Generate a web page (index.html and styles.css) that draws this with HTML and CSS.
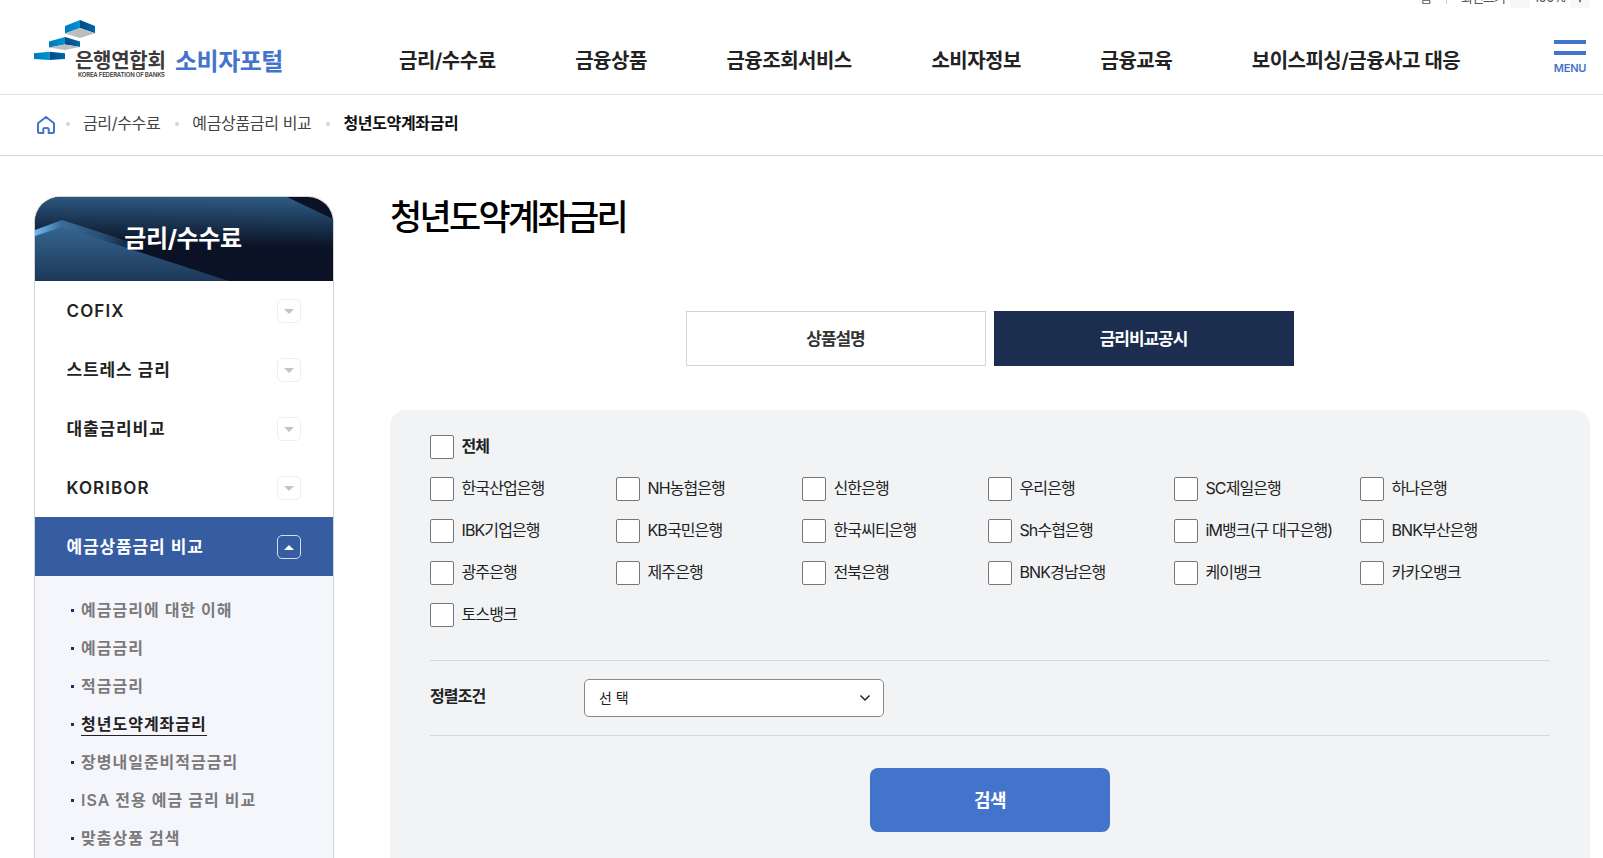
FILE: index.html
```
<!DOCTYPE html>
<html lang="ko">
<head>
  <title>청년도약계좌금리 | 은행연합회 소비자포털</title>
  <meta charset="UTF-8" />
  <link rel="stylesheet" href="styles.css">
</head>
<body>
  <header>
    <div class="util">
      <a href="#">홈</a>
      <span class="util-line"></span>
      <span class="zoom-label">화면크기</span>
      <button class="zoom-btn">-</button>
      <span class="zoom-value">100%</span>
      <button class="zoom-btn">+</button>
    </div>
    <div class="gnb">
      <a href="#" class="logo">
        <svg class="logo-mark" width="62" height="42" viewBox="0 0 62 42">
          <defs>
            <linearGradient id="face-l" x1="0" x2="1"><stop offset="0" stop-color="#0079bd"/><stop offset="1" stop-color="#0093d6"/></linearGradient>
            <linearGradient id="face-r" x1="0" x2="1"><stop offset="0" stop-color="#004a80"/><stop offset="1" stop-color="#0068ac"/></linearGradient>
          </defs>
          <path fill="url(#face-l)" d="M31 7 46 1v8L31 14.5z"/>
          <path fill="url(#face-r)" d="M46 1 61 7v7.300L46 9z"/>
          <path fill="#bdbdbd" d="M31 14.500 46 9l15 5.300L46 19z"/>
          <path fill="url(#face-l)" d="M15 22.500 31 18v7.500l-16 3z"/>
          <path fill="url(#face-r)" d="M31 18l15 4.500V28l-15-2.500z"/>
          <path fill="#bdbdbd" d="M15 28.500l16-3L46 28l-15 3z"/>
          <path fill="url(#face-l)" d="M0 34.300 15.500 32.700V41L0 40z"/>
          <path fill="url(#face-r)" d="M15.500 32.700 31 34.300V40l-15.500 1z"/>
        </svg>
        <span class="logo-name">
          <strong>은행연합회</strong>
          <small>KOREA FEDERATION OF BANKS</small>
        </span>
        <span class="logo-portal">소비자포털</span>
      </a>
      <nav>
        <a href="#">금리/수수료</a>
        <a href="#">금융상품</a>
        <a href="#">금융조회서비스</a>
        <a href="#">소비자정보</a>
        <a href="#">금융교육</a>
        <a href="#">보이스피싱/금융사고 대응</a>
      </nav>
      <button class="menu-btn">
        <span class="menu-bar"></span>
        <span class="menu-bar"></span>
        MENU
      </button>
    </div>
  </header>

  <div class="breadcrumb">
    <svg class="home" width="18" height="18" viewBox="0 0 18 18" fill="none" stroke="#4374cb" stroke-width="2" stroke-linejoin="round">
      <path d="M1 7.200 9 1l8 6.200V15.500Q17 17 15.500 17H11.700V13.500Q11.700 12 10.200 12H7.800Q6.300 12 6.300 13.500V17H2.500Q1 17 1 15.500z"/>
    </svg>
    <i class="dot"></i>
    <a href="#">금리/수수료</a>
    <i class="dot"></i>
    <a href="#">예금상품금리 비교</a>
    <i class="dot"></i>
    <strong>청년도약계좌금리</strong>
  </div>

  <div class="container">
    <aside>
      <h2>
        <svg class="title-bg" viewBox="0 0 298 84" preserveAspectRatio="none">
          <defs>
            <linearGradient id="sky" x1="0.55" y1="0" x2="0.47" y2="1"><stop offset="0" stop-color="#2c5a82"/><stop offset="0.85" stop-color="#0b1226"/></linearGradient>
            <linearGradient id="hill" x1="0" y1="0" x2="0" y2="1"><stop offset="0" stop-color="#35658f"/><stop offset="1" stop-color="#1c3858"/></linearGradient>
            <linearGradient id="ridge" x1="0" x2="1"><stop offset="0" stop-color="#6db9f5"/><stop offset="0.25" stop-color="#3b6c9a"/><stop offset="0.65" stop-color="#2a4c72"/><stop offset="1" stop-color="#0c142b"/></linearGradient>
          </defs>
          <path fill="#0b1226" d="M0 0h298v84H0z"/>
          <path fill="url(#sky)" d="M0 0H252L298 22V57L0 34z"/>
          <path fill="url(#ridge)" d="M0 33 27 23 105 48V60L0 40z"/>
          <path fill="url(#hill)" d="M0 39 27 30 194 84H0z"/>
        </svg>
        <span>금리/수수료</span>
      </h2>
      <ul class="lnb">
        <li><a href="#" class="en">COFIX <i class="arrow"></i></a></li>
        <li><a href="#">스트레스 금리 <i class="arrow"></i></a></li>
        <li><a href="#">대출금리비교 <i class="arrow"></i></a></li>
        <li><a href="#" class="en">KORIBOR <i class="arrow"></i></a></li>
        <li class="active">
          <a href="#">예금상품금리 비교 <i class="arrow"></i></a>
          <ul class="sub">
            <li><a href="#">예금금리에 대한 이해</a></li>
            <li><a href="#">예금금리</a></li>
            <li><a href="#">적금금리</a></li>
            <li><a href="#" class="on">청년도약계좌금리</a></li>
            <li><a href="#">장병내일준비적금금리</a></li>
            <li><a href="#">ISA 전용 예금 금리 비교</a></li>
            <li><a href="#">맞춤상품 검색</a></li>
          </ul>
        </li>
      </ul>
    </aside>

    <main>
      <h1>청년도약계좌금리</h1>
      <div class="tabs">
        <a href="#">상품설명</a>
        <a href="#" class="on">금리비교공시</a>
      </div>
      <form class="search-box">
        <div class="banks">
          <label class="all"><input type="checkbox">전체</label>
          <label><input type="checkbox">한국산업은행</label>
          <label><input type="checkbox">NH농협은행</label>
          <label><input type="checkbox">신한은행</label>
          <label><input type="checkbox">우리은행</label>
          <label><input type="checkbox">SC제일은행</label>
          <label><input type="checkbox">하나은행</label>
          <label><input type="checkbox">IBK기업은행</label>
          <label><input type="checkbox">KB국민은행</label>
          <label><input type="checkbox">한국씨티은행</label>
          <label><input type="checkbox">Sh수협은행</label>
          <label><input type="checkbox">iM뱅크(구 대구은행)</label>
          <label><input type="checkbox">BNK부산은행</label>
          <label><input type="checkbox">광주은행</label>
          <label><input type="checkbox">제주은행</label>
          <label><input type="checkbox">전북은행</label>
          <label><input type="checkbox">BNK경남은행</label>
          <label><input type="checkbox">케이뱅크</label>
          <label><input type="checkbox">카카오뱅크</label>
          <label><input type="checkbox">토스뱅크</label>
        </div>
        <div class="sort">
          <strong>정렬조건</strong>
          <div class="select">
            선 택
            <svg width="12" height="8" viewBox="0 0 12 8" fill="none" stroke="#222" stroke-width="1.500"><path d="M1.500 1.500 6 6l4.500-4.500"/></svg>
          </div>
        </div>
        <button type="button" class="search-btn">검색</button>
      </form>
    </main>
  </div>
</body>
</html>
```

FILE: styles.css
```
* {
  box-sizing: border-box;
}
body {
  margin: 0;
  background: #fff;
  color: #222;
  font-family: Inter, "Noto Sans CJK KR", sans-serif;
  font-size: 16px;
}
a {
  color: inherit;
  text-decoration: none;
}
ul {
  list-style: none;
  margin: 0;
  padding: 0;
}
button {
  border: 0;
  padding: 0;
  font-family: inherit;
}

/* header */
header {
  height: 95px;
  border-bottom: 1px solid #e1e1e1;
}
.util {
  display: flex;
  justify-content: flex-end;
  align-items: flex-end;
  height: 8px;
  padding-right: 13px;
  overflow: hidden;
  font-size: 13px;
  line-height: 21px;
  letter-spacing: -1px;
  color: #555;
}
.util-line {
  width: 1px;
  height: 14px;
  margin: 0 14px 4px 15px;
  background: #ccc;
}
.zoom-label {
  margin-right: 5px;
}
.zoom-value {
  width: 40px;
  text-align: center;
  letter-spacing: -0.5px;
}
.zoom-btn {
  width: 20px;
  height: 20px;
  border-radius: 3px;
  background: #f7f7f7;
  font-size: 15px;
  line-height: 16px;
  color: #333;
}
.gnb {
  display: flex;
  height: 86px;
  padding: 0 17px 0 34px;
}
.logo {
  display: flex;
  width: 365px;
  padding-top: 11px;
}
.logo-mark {
  flex: none;
  margin-right: -21px;
}
.logo-name {
  display: flex;
  flex-direction: column;
  width: 91px;
  padding-top: 30px;
  color: #3e3a39;
}
.logo-name strong {
  font-size: 20px;
  font-weight: 600;
  line-height: 24px;
  letter-spacing: -0.3px;
}
.logo-name small {
  margin-left: 3px;
  font-size: 6px;
  font-weight: 600;
  line-height: 4px;
  letter-spacing: -0.2px;
  white-space: nowrap;
}
.logo-portal {
  margin-left: 9px;
  padding-top: 25px;
  font-size: 24px;
  font-weight: 700;
  line-height: 36px;
  letter-spacing: -0.5px;
  color: #4374cb;
}
nav {
  display: flex;
  flex: 1;
  gap: 79.700px;
  font-size: 20px;
  font-weight: 600;
  line-height: 30px;
  letter-spacing: -0.510px;
  padding-top: 38px;
  white-space: nowrap;
}
.menu-btn {
  display: flex;
  flex-direction: column;
  align-items: center;
  width: 32px;
  padding-top: 32px;
  background: none;
  color: #4374cb;
  font-size: 11px;
  font-weight: 600;
  line-height: 12px;
  letter-spacing: -0.2px;
}
.menu-bar {
  width: 32px;
  height: 4px;
  margin-bottom: 7px;
  background: #4374cb;
}

/* breadcrumb */
.breadcrumb {
  display: flex;
  height: 61px;
  padding: 16px 37px 0;
  border-bottom: 1px solid #d5d5d5;
  line-height: 24px;
  letter-spacing: -0.350px;
  color: #444;
}
.breadcrumb strong {
  color: #111;
}
.home {
  margin-top: 5px;
}
.dot {
  width: 4px;
  height: 4px;
  margin: 11px 13px 0 15px;
  border-radius: 50%;
  background: #d5d5d5;
}
.home + .dot {
  margin-left: 11px;
}

/* left menu */
.container {
  display: flex;
  gap: 56px;
  height: calc(100vh - 156px);
  padding: 40px 13px 0 34px;
}
aside {
  flex: none;
  width: 300px;
  overflow: hidden;
  border: 1px solid #d3d3d3;
  border-bottom: 0;
  border-radius: 26px 26px 0 0;
}
aside h2 {
  display: grid;
  height: 84px;
  margin: 0;
  color: #fff;
  font-size: 24px;
  letter-spacing: -0.4px;
}
aside h2 > * {
  grid-area: 1 / 1;
}
aside h2 span {
  place-self: center;
  padding: 0 2px 6px 0;
  z-index: 1;
}
.title-bg {
  width: 298px;
  height: 84px;
}
.lnb > li > a {
  display: flex;
  justify-content: space-between;
  align-items: center;
  height: 59px;
  padding: 0 32px 2px 31.500px;
  font-size: 17px;
  font-weight: 600;
  letter-spacing: 0.870px;
}
.lnb > li > .en {
  padding-bottom: 0;
  letter-spacing: 1.100px;
}
.arrow {
  display: grid;
  place-items: center;
  width: 24px;
  height: 24px;
  margin-top: 3px;
  border: 1px solid #efefef;
  border-radius: 5px;
}
.en .arrow {
  margin-top: 1px;
}
.arrow::before {
  content: "";
  border: 5px solid transparent;
  border-bottom: 0;
  border-top-color: #c4c4c4;
}
.lnb > .active > a {
  background: #365da2;
  color: #fff;
}
.active .arrow {
  border-color: #d3ddee;
}
.active .arrow::before {
  border: 5px solid transparent;
  border-top: 0;
  border-bottom-color: #fff;
}
.sub {
  height: 400px;
  padding: 15px 0 0 36px;
  background: #f5f6fc;
}
.sub li {
  display: flex;
  align-items: center;
  height: 38px;
  font-weight: 600;
  letter-spacing: 1px;
  color: #7a7a7a;
}
.sub li::before {
  content: "";
  width: 3px;
  height: 3px;
  margin-right: 7px;
  background: #1d2f63;
}
.sub a {
  line-height: 22px;
  border-bottom: 1px solid transparent;
}
.sub .on {
  border-color: #222;
  color: #222;
}

/* content */
main {
  display: flex;
  flex-direction: column;
  width: 1200px;
}
h1 {
  margin: 0;
  font-size: 35px;
  font-weight: 500;
  line-height: 42px;
  letter-spacing: -2.700px;
  color: #000;
}
.tabs {
  display: flex;
  justify-content: center;
  gap: 8px;
  margin: 73px 0 44px;
}
.tabs a {
  width: 300px;
  height: 55px;
  padding-right: 1px;
  border: 1px solid #d3d3d3;
  font-size: 17px;
  font-weight: 600;
  line-height: 55px;
  letter-spacing: -1.050px;
  text-align: center;
  color: #333;
}
.tabs .on {
  border-color: #1c2e50;
  background: #1c2e50;
  color: #fff;
}
.search-box {
  flex: 1;
  padding: 25px 40px 0;
  border-radius: 16px 16px 0 0;
  background: #f1f3f5;
}
.banks {
  display: grid;
  grid-template-columns: repeat(6, 186px);
  gap: 18px 0;
  padding-bottom: 33px;
  border-bottom: 1px solid #d5d7d9;
}
.banks label {
  display: flex;
  align-items: center;
  height: 24px;
  line-height: 23px;
  padding-bottom: 1px;
  letter-spacing: -0.9px;
  white-space: nowrap;
}
.banks .all {
  grid-column: 1 / -1;
  font-weight: 600;
}
.banks input {
  appearance: none;
  flex: none;
  width: 24px;
  height: 24px;
  margin: 1px 7.500px 0 0;
  border: 1px solid #767676;
  border-radius: 2px;
  background: #fff;
}
.sort {
  display: flex;
  height: 75px;
  padding-top: 18px;
  border-bottom: 1px solid #d5d7d9;
  letter-spacing: -0.9px;
}
.sort strong {
  width: 154px;
  font-weight: 600;
  line-height: 34px;
}
.select {
  display: flex;
  justify-content: space-between;
  align-items: center;
  width: 300px;
  height: 38px;
  padding: 0 12px 2px 14px;
  border: 1px solid #888;
  border-radius: 5px;
  background: #fff;
  font-size: 14px;
  letter-spacing: 0;
}
.select svg {
  margin-top: 2px;
}
.search-btn {
  display: block;
  width: 240px;
  height: 64px;
  margin: 32px auto 0;
  padding-bottom: 2px;
  border-radius: 8px;
  background: #4374cb;
  color: #fff;
  font-size: 18px;
  font-weight: 600;
  letter-spacing: -0.6px;
}
```
